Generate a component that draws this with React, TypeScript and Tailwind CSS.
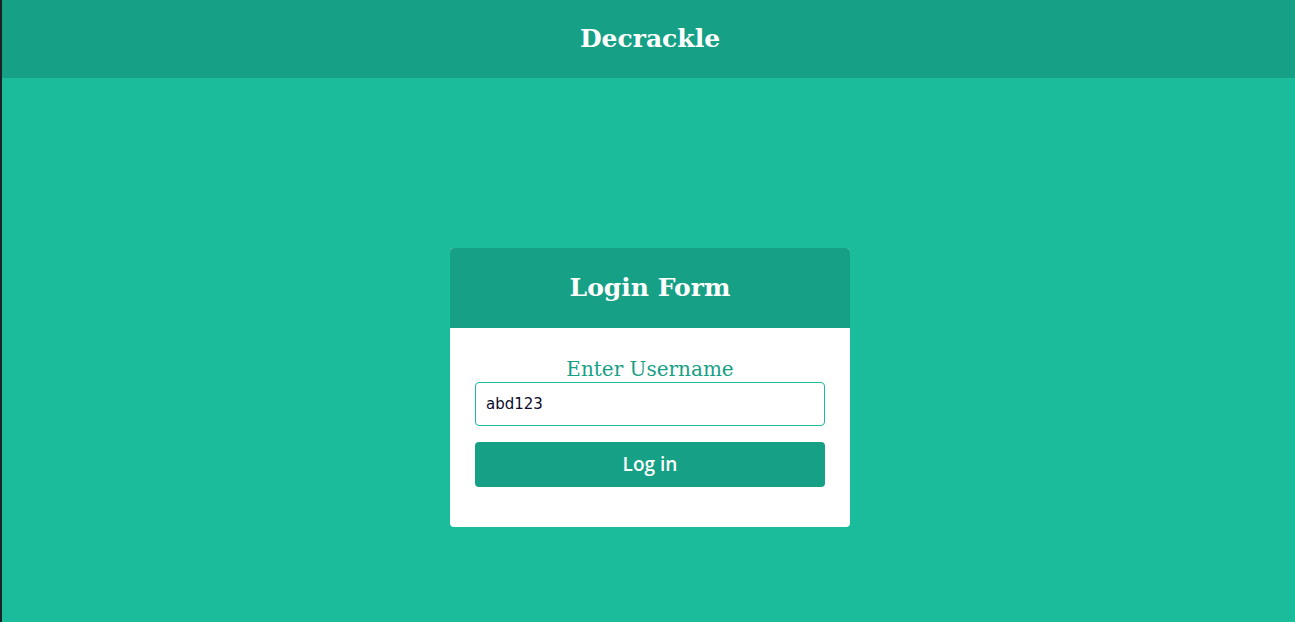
import React, { useState } from 'react';

export default function App() {
  const [username, setUsername] = useState('abd123');

  return (
    <div className="flex h-[622px] w-full bg-[#1a2a2a]">
      <div className="w-[2px] shrink-0 bg-[#1c2326]" />
      <div className="flex flex-1 flex-col bg-[#1abc9c]">
        {/* Top bar */}
        <header className="flex h-[78px] items-center justify-center bg-[#16a085] pl-[3px]">
          <h1 className="font-['DejaVu_Serif',serif] text-[25px] font-bold text-white">Decrackle</h1>
        </header>

        <main className="flex justify-center pl-[3px] pt-[170px]">
          <div className="w-[400px] overflow-hidden rounded-[4px] bg-white">
            <div className="flex h-[80px] items-center justify-center bg-[#16a085]">
              <h2 className="font-['DejaVu_Serif',serif] text-[25px] font-bold text-white">Login Form</h2>
            </div>
            <form className="flex flex-col px-[25px] pb-[40px] pt-[28px]" onSubmit={(e) => e.preventDefault()}>
              <label className="text-center font-['DejaVu_Serif',serif] text-[20px] leading-[26px] text-[#16a085]">
                Enter Username
              </label>
              <input
                value={username}
                onChange={(e) => setUsername(e.target.value)}
                className="h-[44px] rounded-[4px] border border-[#1abc9c] px-[10px] font-['DejaVu_Sans',sans-serif] text-[15px] text-[#0b0b2a] outline-none"
              />
              <button
                type="submit"
                className="mt-[16px] h-[45px] rounded-[4px] bg-[#16a085] font-['Open_Sans',sans-serif] text-[19px] font-semibold text-white"
              >
                Log in
              </button>
            </form>
          </div>
        </main>
      </div>
    </div>
  );
}
